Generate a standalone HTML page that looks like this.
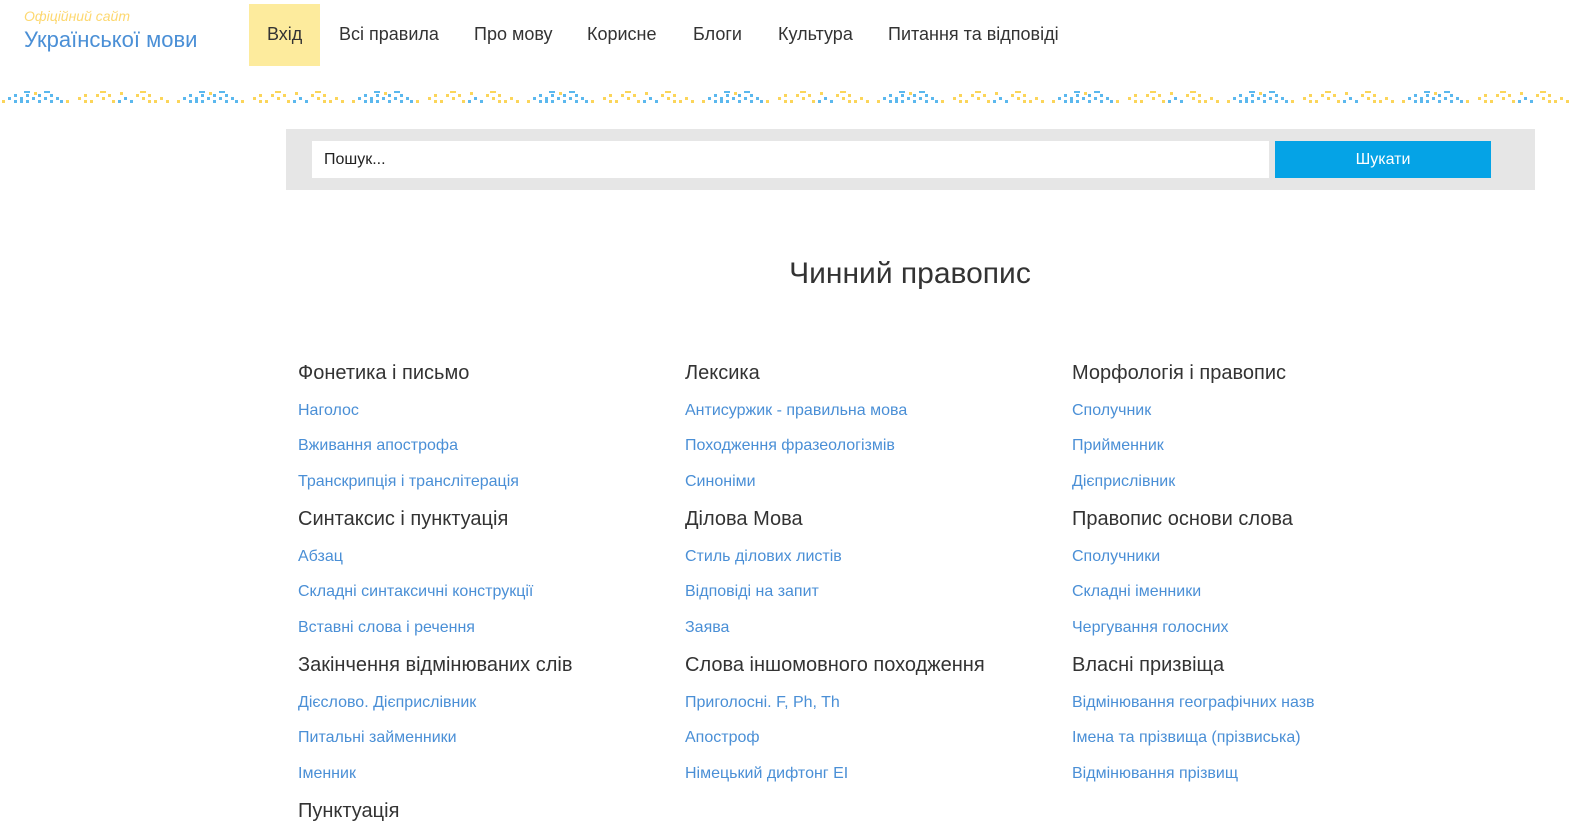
<!DOCTYPE html>
<html><head><meta charset="utf-8"><style>
body{margin:0;width:1569px;height:833px;overflow:hidden;background:#fff;font-family:"Liberation Sans","DejaVu Sans",sans-serif;}
.a{position:absolute}
.nav{font-size:18px;color:#333;top:24px}
.h{font-size:20px;color:#333}
.l{font-size:16px;color:#4a8fd6}
</style></head><body>
<div class="a" style="left:24px;top:8px;font-size:14px;font-style:italic;color:#fdd870">Офіційний сайт</div>
<div class="a" style="left:24px;top:27px;font-size:22px;color:#4a8fd6">Української мови</div>
<div class="a" style="left:249px;top:4px;width:71px;height:62px;background:#fdeb9d"></div>
<div class="a nav" style="left:267px">Вхід</div>
<div class="a nav" style="left:339px">Всі правила</div>
<div class="a nav" style="left:474px">Про мову</div>
<div class="a nav" style="left:587px">Корисне</div>
<div class="a nav" style="left:693px">Блоги</div>
<div class="a nav" style="left:778px">Культура</div>
<div class="a nav" style="left:888px">Питання та відповіді</div>
<svg class="a" style="left:0;top:91px" width="1569" height="16">
<defs><pattern id="p" width="175" height="16" patternUnits="userSpaceOnUse">
<g fill="#5bb8ee">
<rect x="8" y="6" width="3" height="3"/><rect x="14" y="3" width="3" height="3"/><rect x="14" y="9" width="3" height="3"/><rect x="20" y="6" width="3" height="3"/><rect x="26" y="3" width="3" height="3"/><rect x="26" y="9" width="3" height="3"/><rect x="32" y="6" width="3" height="3"/><rect x="38" y="3" width="3" height="3"/><rect x="44" y="6" width="3" height="3"/><rect x="50" y="3" width="3" height="3"/><rect x="50" y="9" width="3" height="3"/><rect x="56" y="6" width="3" height="3"/><rect x="60" y="9" width="3" height="3"/><rect x="24" y="0" width="6" height="2"/><rect x="44" y="0" width="6" height="2"/><rect x="38" y="9" width="3" height="3"/><rect x="20" y="9" width="3" height="3"/>
<rect x="118" y="9" width="3" height="3"/><rect x="124" y="6" width="3" height="3"/><rect x="130" y="9" width="3" height="3"/></g>
<g fill="#fbd55a">
<rect x="2" y="9" width="3" height="3"/><rect x="34" y="1" width="3" height="3"/><rect x="66" y="9" width="3" height="3"/>
<rect x="78" y="6" width="3" height="3"/><rect x="84" y="3" width="3" height="3"/><rect x="90" y="9" width="3" height="3"/><rect x="96" y="3" width="3" height="3"/><rect x="102" y="6" width="3" height="3"/><rect x="108" y="3" width="3" height="3"/><rect x="112" y="9" width="3" height="3"/><rect x="120" y="1" width="3" height="3"/><rect x="136" y="3" width="3" height="3"/><rect x="142" y="6" width="3" height="3"/><rect x="148" y="3" width="3" height="3"/><rect x="154" y="9" width="3" height="3"/><rect x="160" y="6" width="3" height="3"/><rect x="166" y="9" width="3" height="3"/><rect x="100" y="0" width="6" height="2"/><rect x="140" y="0" width="6" height="2"/><rect x="84" y="9" width="3" height="3"/><rect x="148" y="9" width="3" height="3"/></g>
</pattern></defs><rect width="1569" height="16" fill="url(#p)"/></svg>
<div class="a" style="left:286px;top:129px;width:1249px;height:61px;background:#e6e6e6"></div>
<div class="a" style="left:312px;top:141px;width:957px;height:37px;background:#fff"></div>
<div class="a" style="left:324px;top:151px;font-size:16px;color:#222">Пошук...</div>
<div class="a" style="left:1275px;top:141px;width:216px;height:37px;background:#05a3e6;color:#fff;font-size:16px;text-align:center;line-height:37px">Шукати</div>
<div class="a" style="left:0;width:1820px;top:257px;text-align:center;font-size:30px;color:#333">Чинний правопис</div>

<div class="a h" style="left:298px;top:362px">Фонетика і письмо</div>
<div class="a l" style="left:298px;top:402px">Наголос</div>
<div class="a l" style="left:298px;top:437px">Вживання апострофа</div>
<div class="a l" style="left:298px;top:473px">Транскрипція і транслітерація</div>
<div class="a h" style="left:298px;top:508px">Синтаксис і пунктуація</div>
<div class="a l" style="left:298px;top:548px">Абзац</div>
<div class="a l" style="left:298px;top:583px">Складні синтаксичні конструкції</div>
<div class="a l" style="left:298px;top:619px">Вставні слова і речення</div>
<div class="a h" style="left:298px;top:654px">Закінчення відмінюваних слів</div>
<div class="a l" style="left:298px;top:694px">Дієслово. Дієприслівник</div>
<div class="a l" style="left:298px;top:729px">Питальні займенники</div>
<div class="a l" style="left:298px;top:765px">Іменник</div>
<div class="a h" style="left:298px;top:800px">Пунктуація</div>

<div class="a h" style="left:685px;top:362px">Лексика</div>
<div class="a l" style="left:685px;top:402px">Антисуржик - правильна мова</div>
<div class="a l" style="left:685px;top:437px">Походження фразеологізмів</div>
<div class="a l" style="left:685px;top:473px">Синоніми</div>
<div class="a h" style="left:685px;top:508px">Ділова Мова</div>
<div class="a l" style="left:685px;top:548px">Стиль ділових листів</div>
<div class="a l" style="left:685px;top:583px">Відповіді на запит</div>
<div class="a l" style="left:685px;top:619px">Заява</div>
<div class="a h" style="left:685px;top:654px">Слова іншомовного походження</div>
<div class="a l" style="left:685px;top:694px">Приголосні. F, Ph, Th</div>
<div class="a l" style="left:685px;top:729px">Апостроф</div>
<div class="a l" style="left:685px;top:765px">Німецький дифтонг EI</div>

<div class="a h" style="left:1072px;top:362px">Морфологія і правопис</div>
<div class="a l" style="left:1072px;top:402px">Сполучник</div>
<div class="a l" style="left:1072px;top:437px">Прийменник</div>
<div class="a l" style="left:1072px;top:473px">Дієприслівник</div>
<div class="a h" style="left:1072px;top:508px">Правопис основи слова</div>
<div class="a l" style="left:1072px;top:548px">Сполучники</div>
<div class="a l" style="left:1072px;top:583px">Складні іменники</div>
<div class="a l" style="left:1072px;top:619px">Чергування голосних</div>
<div class="a h" style="left:1072px;top:654px">Власні призвіща</div>
<div class="a l" style="left:1072px;top:694px">Відмінювання географічних назв</div>
<div class="a l" style="left:1072px;top:729px">Імена та прізвища (прізвиська)</div>
<div class="a l" style="left:1072px;top:765px">Відмінювання прізвищ</div>
</body></html>
